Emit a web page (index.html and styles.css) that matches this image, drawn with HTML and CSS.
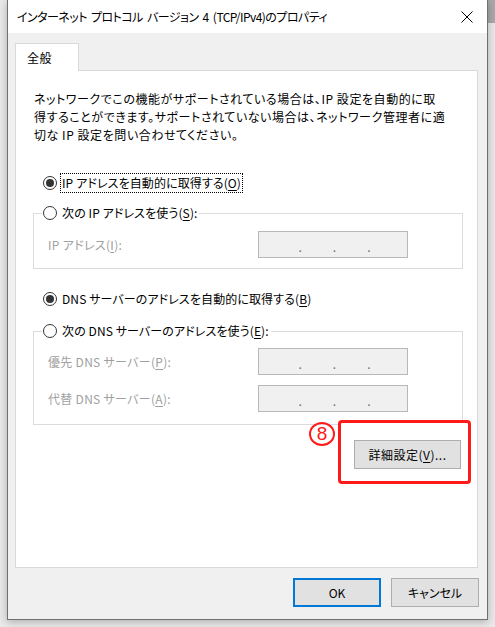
FILE: index.html
```html
<!DOCTYPE html>
<html lang="ja">
<head>
<meta charset="utf-8">
<title>インターネット プロトコル バージョン 4 (TCP/IPv4)のプロパティ</title>
<link rel="stylesheet" href="styles.css">
</head>
<body>
<div class="desk-top"></div>
<div class="window">
  <div class="titlebar">
    <span class="title">インターネット プロトコル バージョン 4 (TCP/IPv4)のプロパティ</span>
    <svg class="close" width="12" height="12" viewBox="0 0 12 12"><path d="M0.5 0.5 L11.5 11.5 M11.5 0.5 L0.5 11.5" stroke="#000" stroke-width="1" fill="none"/></svg>
  </div>
  <div class="body">
    <div class="tabs"><div class="tab">全般</div></div>
    <div class="panel">
      <p class="intro">ネットワークでこの機能がサポートされている場合は、IP 設定を自動的に取<br>得することができます。サポートされていない場合は、ネットワーク管理者に適<br>切な IP 設定を問い合わせてください。</p>

      <div class="radio-row first">
        <span class="radio checked"></span>
        <span class="label focus">IP アドレスを自動的に取得する(<u>O</u>)</span>
      </div>

      <fieldset class="group g1">
        <legend class="radio-row">
          <span class="radio"></span>
          <span class="label">次の IP アドレスを使う(<u>S</u>):</span>
        </legend>
        <div class="field-row">
          <span class="flabel">IP アドレス(<u>I</u>):</span>
          <span class="ipbox"><i>.</i><i>.</i><i>.</i></span>
        </div>
      </fieldset>

      <div class="radio-row dns">
        <span class="radio checked"></span>
        <span class="label">DNS サーバーのアドレスを自動的に取得する(<u>B</u>)</span>
      </div>

      <fieldset class="group g2">
        <legend class="radio-row">
          <span class="radio"></span>
          <span class="label">次の DNS サーバーのアドレスを使う(<u>E</u>):</span>
        </legend>
        <div class="field-row">
          <span class="flabel">優先 DNS サーバー(<u>P</u>):</span>
          <span class="ipbox"><i>.</i><i>.</i><i>.</i></span>
        </div>
        <div class="field-row second">
          <span class="flabel">代替 DNS サーバー(<u>A</u>):</span>
          <span class="ipbox"><i>.</i><i>.</i><i>.</i></span>
        </div>
      </fieldset>

      <div class="adv-row">
        <div class="annot">
          <span class="num">8</span>
          <button class="btn adv">詳細設定(<u>V</u>)...</button>
        </div>
      </div>
    </div>
    <div class="buttons">
      <button class="btn ok">OK</button>
      <button class="btn">キャンセル</button>
    </div>
  </div>
</div>
</body>
</html>
```

FILE: styles.css
```css
* { box-sizing: border-box; }
html, body { margin: 0; padding: 0; }
body {
  width: 495px;
  height: 627px;
  overflow: hidden;
  background: #e9e9e9;
  font-family: "Noto Sans CJK JP", "Noto Sans", sans-serif;
  font-size: 12px;
  color: #000;
  position: relative;
}
.desk-top {
  position: absolute;
  right: 0;
  top: 0;
  width: 8px;
  height: 23px;
  background: #a9a9a9;
}
.window {
  position: relative;
  margin-left: 7px;
  width: 481px;
  height: 620px;
  border: 1px solid #707070;
  border-top: none;
  background: #f0f0f0;
  box-shadow: 0 2px 8px rgba(0,0,0,0.25);
  display: flex;
  flex-direction: column;
}
.titlebar {
  height: 33px;
  background: #fff;
  display: flex;
  align-items: center;
  justify-content: space-between;
  padding: 0 14px 0 9px;
}
.title {
  font-feature-settings: "palt";
  font-size: 12px;
  line-height: 16px;
  padding-top: 1px;
  letter-spacing: -0.55px;
  word-spacing: 2px;
}
.close { display: block; margin-top: 1px; }
.body {
  flex: 1;
  padding: 10px 8px 0 7px;
}
.tabs { display: flex; }
.tab {
  position: relative;
  z-index: 1;
  width: 64px;
  height: 28px;
  margin-bottom: -1px;
  background: #fff;
  border: 1px solid #d9d9d9;
  border-bottom: none;
  padding: 5px 0 0 11px;
  line-height: 18px;
  letter-spacing: 0.5px;
}
.panel {
  width: 463px;
  height: 498px;
  background: #fff;
  border: 1px solid #d9d9d9;
  padding: 19px 0 0 17px;
}
.intro {
  margin: 0 0 0 1px;
  line-height: 18px;
  font-feature-settings: "palt";
  letter-spacing: 0.55px;
  white-space: nowrap;
}
.radio-row {
  display: flex;
  align-items: center;
  height: 18px;
  font-feature-settings: "palt";
}
.radio-row.first { margin-top: 30px; margin-left: 10px; }
.radio {
  width: 14px;
  height: 14px;
  border: 1px solid #333;
  border-radius: 50%;
  background: #fff;
  margin-right: 5px;
  display: flex;
  align-items: center;
  justify-content: center;
  flex: none;
}
.radio.checked::after {
  content: "";
  width: 8px;
  height: 8px;
  border-radius: 50%;
  background: #333;
}
.label { line-height: 16px; letter-spacing: 0.1px; }
.label.focus {
  outline: 1px dotted #000;
  outline-offset: 0;
  padding: 0 1px;
  height: 18px;
  line-height: 18px;
  margin-left: -1px;
}
u { text-decoration: underline; text-underline-offset: 2px; }
.group {
  margin: 12px 0 0 0;
  border: 1px solid #dcdcdc;
  padding: 9px 10px 10px 8px;
  width: 430px;
}
.group legend {
  padding: 0 2px 0 1px;
}
.g2 { margin-top: 14px; padding-top: 8px; padding-bottom: 12px; }
.field-row {
  display: flex;
  align-items: center;
  justify-content: space-between;
  padding-left: 6px;
  padding-right: 44px;
  font-feature-settings: "palt";
}
.field-row.second { margin-top: 10px; }
.flabel { color: #a0a0a0; letter-spacing: 0.3px; }
.ipbox {
  width: 150px;
  height: 27px;
  border: 1px solid #b8b8b8;
  background: #f0f0f0;
  display: flex;
  justify-content: center;
  gap: 31px;
  padding: 0 0 0 3px;
}
.ipbox i {
  font-style: normal;
  color: #6d6d6d;
  font-size: 12px;
  line-height: 27px;
  margin-top: 1px;
}
.radio-row.dns { margin-top: 21px; margin-left: 10px; }
.adv-row {
  display: flex;
  justify-content: flex-end;
  margin-top: -5px;
  padding-right: 6px;
}
.annot {
  position: relative;
  z-index: 1;
  background: #fff;
  border: 3px solid #ff1a1a;
  border-radius: 4px;
  width: 133px;
  height: 64px;
  padding: 17px 7px 0 13px;
}
.num {
  position: absolute;
  left: -32px;
  top: -1px;
  width: 26px;
  height: 24px;
  border: 2px solid #ff1a1a;
  border-radius: 50%;
  color: #ff1a1a;
  font-family: "Liberation Sans", sans-serif;
  font-size: 19px;
  line-height: 20px;
  text-align: center;
}
.btn {
  font-family: "Noto Sans CJK JP", "Noto Sans", sans-serif;
  font-size: 12px;
  font-feature-settings: "palt";
  color: #000;
  background: #e1e1e1;
  border: 1px solid #adadad;
  width: 88px;
  height: 29px;
  padding: 0;
  margin: 0;
  line-height: 16px;
}
.btn.adv { width: 107px; height: 29px; letter-spacing: 0.5px; }
.btn.ok { border: 2px solid #0078d7; }
.buttons {
  display: flex;
  justify-content: flex-end;
  gap: 10px;
  margin-top: 10px;
  padding-right: 0;
}
```
